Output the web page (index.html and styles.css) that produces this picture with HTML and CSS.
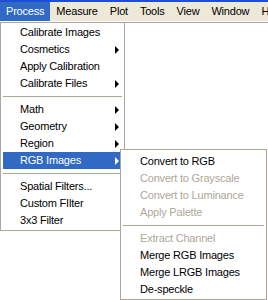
FILE: index.html
```html
<!DOCTYPE html>
<html lang="en">
<head>
    <meta charset="UTF-8">
    <title>Process Menu</title>
    <link rel="stylesheet" href="styles.css">
</head>
<body>

<!-- Menu bar -->
<div class="menubar">
    <span class="bar-item open">Process</span>
    <span class="bar-item">Measure</span>
    <span class="bar-item">Plot</span>
    <span class="bar-item">Tools</span>
    <span class="bar-item">View</span>
    <span class="bar-item">Window</span>
    <span class="bar-item">Help</span>
</div>

<div class="menu-area">
    <!-- Process menu -->
    <div class="menu main-menu">
        <div class="item">Calibrate Images</div>
        <div class="item sub">Cosmetics</div>
        <div class="item">Apply Calibration</div>
        <div class="item sub">Calibrate Files</div>
        <div class="sep"></div>
        <div class="item sub">Math</div>
        <div class="item sub">Geometry</div>
        <div class="item sub">Region</div>
        <div class="item sub active">RGB Images</div>
        <div class="sep"></div>
        <div class="item">Spatial Filters...</div>
        <div class="item">Custom FIlter</div>
        <div class="item">3x3 Filter</div>
    </div>

    <!-- RGB Images submenu -->
    <div class="menu sub-menu">
        <div class="item">Convert to RGB</div>
        <div class="item disabled">Convert to Grayscale</div>
        <div class="item disabled">Convert to Luminance</div>
        <div class="item disabled">Apply Palette</div>
        <div class="sep"></div>
        <div class="item disabled">Extract Channel</div>
        <div class="item">Merge RGB Images</div>
        <div class="item">Merge LRGB Images</div>
        <div class="item">De-speckle</div>
    </div>
</div>

</body>
</html>
```

FILE: styles.css
```css
body {
    margin: 0;
    background: #ffffff;
    font-family: Tahoma, "Liberation Sans", Arial, sans-serif;
    font-size: 11px;
    letter-spacing: -0.2px;
    color: #000000;
}

.menubar {
    display: flex;
    height: 19px;
    background: #ece9d8;
    border-top: 2px solid #1c4fd8;
    border-bottom: 1px solid #ffffff;
    white-space: nowrap;
    overflow: hidden;
}
.bar-item {
    padding: 0 6px;
    line-height: 19px;
}
.bar-item.open {
    background: #316ac5;
    color: #ffffff;
    margin-top: -2px;
    padding-top: 2px;
}

.menu-area {
    position: relative;
    height: 278px;
    border-top: 1px solid #aca899;
}

.menu {
    background: #ffffff;
    border: 1px solid #aca899;
    padding: 1px 2px 1px;
    box-sizing: border-box;
}
.main-menu {
    width: 125px;
    border-top: none;
    padding-top: 1px;
}
.sub-menu {
    position: absolute;
    left: 120px;
    top: 126px;
    width: 147px;
    padding-top: 3px;
}

.item {
    position: relative;
    height: 17px;
    line-height: 17px;
    padding-left: 17px;
    white-space: nowrap;
}
.item.sub::after {
    content: "";
    position: absolute;
    right: 3px;
    top: 5px;
    border-left: 4px solid #000000;
    border-top: 4px solid transparent;
    border-bottom: 4px solid transparent;
}
.item.active {
    background: #316ac5;
    color: #ffffff;
}
.item.active::after {
    border-left-color: #ffffff;
}
.item.disabled {
    color: #aca899;
}

.sep {
    height: 1px;
    background: #aca899;
    margin: 4px 0 4px;
}
```
